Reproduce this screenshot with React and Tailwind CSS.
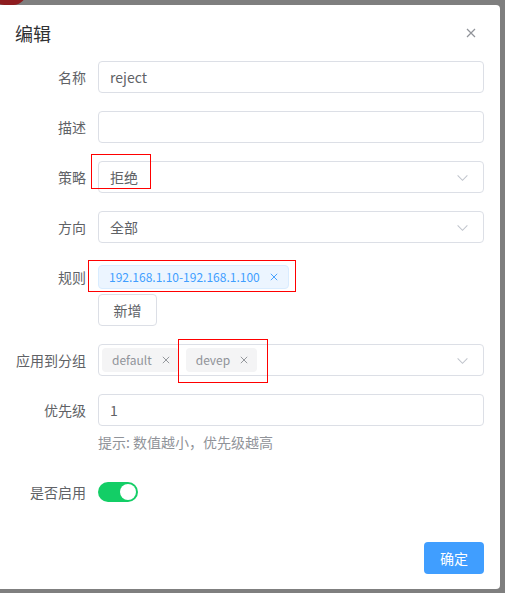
import { useState } from 'react';

const font = { fontFamily: '"Noto Sans CJK SC", "Noto Sans", sans-serif' };

const Chevron = () => (
    <svg width="13" height="13" viewBox="0 0 16 16" fill="none" stroke="#c0c4cc" strokeWidth="1.3">
        <path d="M2 5.5l6 6 6-6" />
    </svg>
);

const Close = ({ size = 8, color = '#909399' }) => (
    <svg width={size} height={size} viewBox="0 0 10 10" stroke={color} strokeWidth="1.2">
        <path d="M1 1l8 8M9 1l-8 8" />
    </svg>
);

const Row = ({ label, children, className = 'mb-[18px]' }) => (
    <div className={`flex ${className}`}>
        <div className="w-[98px] shrink-0 whitespace-nowrap pr-3 text-right text-sm leading-8 text-[#606266]">{label}</div>
        <div className="flex-1">{children}</div>
    </div>
);

const Box = ({ children, select, className = 'pl-[11px]' }) => (
    <div className={`flex h-8 items-center rounded border border-[#dcdfe6] bg-white pr-[14px] text-sm text-[#606266] ${className}`}>
        <div className="flex flex-1 items-center">{children}</div>
        {select && <Chevron />}
    </div>
);

const App = () => {
    const [enabled, setEnabled] = useState(true);

    return (
        <div className="relative h-[593px] w-[505px] overflow-hidden bg-[#7f7f7f]" style={font}>
            <div className="absolute -left-2 -top-5 h-[25px] w-[34px] rounded-full bg-[#8e1c1f]" />
            <div className="relative mt-[5px] flex h-[584px] w-[500px] flex-col rounded-r bg-white">
                <div className="flex items-start justify-between pl-[15px] pr-[19px] pt-4">
                    <h2 className="text-lg leading-6 text-[#303133]">编辑</h2>
                    <button className="mt-[2px] p-[5px]"><Close size={10} /></button>
                </div>

                <div className="mt-4 pr-4">
                    <Row label="名称"><Box>reject</Box></Row>
                    <Row label="描述"><Box /></Row>
                    <Row label="策略">
                        <div className="relative">
                            <Box select>拒绝</Box>
                            <div className="absolute left-[-7px] top-[-7px] h-[35px] w-[60px] border border-[#ff0000]" />
                        </div>
                    </Row>
                    <Row label="方向"><Box select>全部</Box></Row>
                    <Row label="规则">
                        <div className="relative flex h-8 items-center">
                            <span className="flex h-6 items-center gap-[10px] rounded border border-[#d9ecff] bg-[#ecf5ff] pl-[10px] pr-[10px] text-xs text-[#409eff]">
                                192.168.1.10-192.168.1.100
                                <Close size={8} color="#409eff" />
                            </span>
                            <div className="absolute left-[-10px] top-[-1px] h-[32px] w-[208px] border border-[#ff0000]" />
                        </div>
                        <button className="mt-px h-8 w-[59px] rounded border border-[#dcdfe6] bg-white text-sm text-[#606266]">新增</button>
                    </Row>
                    <Row label="应用到分组">
                        <div className="relative">
                            <Box select className="pl-[3px]">
                                <div className="flex gap-[7px]">
                                    <span className="flex h-6 items-center gap-[10px] rounded bg-[#f4f4f5] pl-[10px] pr-[9px] text-xs text-[#909399]">
                                        default <Close size={8} />
                                    </span>
                                    <span className="flex h-6 items-center gap-[10px] rounded bg-[#f4f4f5] pl-[10px] pr-[9px] text-xs text-[#909399]">
                                        devep <Close size={8} />
                                    </span>
                                </div>
                            </Box>
                            <div className="absolute left-[80px] top-[-5px] h-[44px] w-[90px] border border-[#ff0000]" />
                        </div>
                    </Row>
                    <Row label="优先级" className="mb-0">
                        <Box>1</Box>
                        <div className="mt-[6px] text-sm leading-5 text-[#909399]">提示: 数值越小，优先级越高</div>
                    </Row>
                    <Row label="是否启用" className="mt-6">
                        <div className="flex h-8 items-center">
                            <button
                                onClick={() => setEnabled(!enabled)}
                                className={`flex h-5 w-10 items-center rounded-full p-[2px] ${enabled ? 'justify-end bg-[#13ce66]' : 'justify-start bg-[#dcdfe6]'}`}
                            >
                                <span className="h-4 w-4 rounded-full bg-white" />
                            </button>
                        </div>
                    </Row>
                </div>

                <div className="mt-auto flex justify-end pb-[15px] pr-4">
                    <button className="h-8 w-[60px] rounded bg-[#409eff] text-sm text-white">确定</button>
                </div>
            </div>
        </div>
    );
};

export default App;
